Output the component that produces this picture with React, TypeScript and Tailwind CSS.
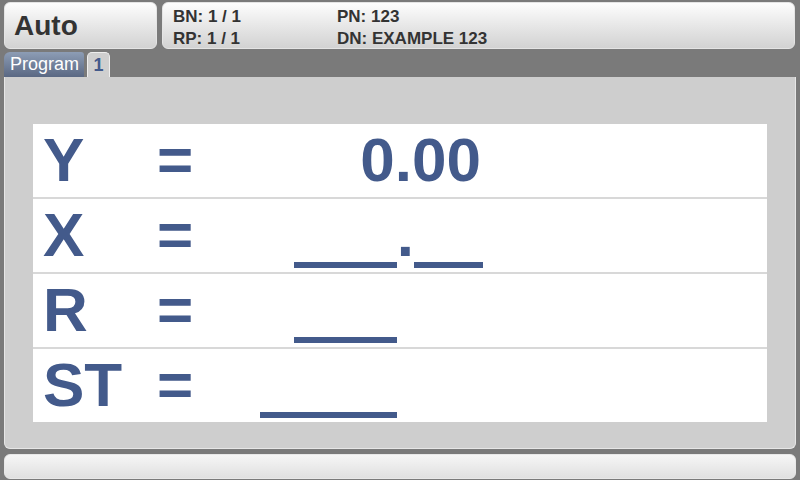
const blue = "text-[#435a8b]";

function Blank({ w }: { w: string }) {
  return <span className={`inline-block h-[6px] align-[-12px] bg-[#435a8b] ${w}`} />;
}

const rows = [
  { label: "Y", value: <>0.00</>, pad: "pr-[2px]" },
  {
    label: "X",
    value: (
      <>
        <Blank w="w-[103px]" />.<Blank w="w-[69px]" />
      </>
    ),
    pad: "",
  },
  { label: "R", value: <Blank w="w-[103px]" />, pad: "pr-[86px]" },
  { label: "ST", value: <Blank w="w-[137px]" />, pad: "pr-[86px]" },
];

export default function App() {
  return (
    <div className="w-[800px] h-[480px] overflow-hidden bg-[#7a7a7a] pt-[2px] px-[4px] font-['Liberation_Sans',Arial,sans-serif]">
      {/* Header */}
      <div className="flex h-[47px] gap-[5px] pr-[1px]">
        <div className="w-[153px] flex items-center pl-[9px] rounded-[6px] border border-[#e4e4e4] bg-gradient-to-b from-[#fdfdfd] to-[#d2d2d2]">
          <span className="text-[28px] leading-[28px] font-bold text-[#333333]">Auto</span>
        </div>
        <div className="flex-1 flex pl-[10px] pt-[3px] rounded-[6px] border border-[#e4e4e4] bg-gradient-to-b from-[#fdfdfd] to-[#d2d2d2] text-[17px] leading-[22px] font-bold text-[#333333]">
          <div className="w-[164px]">
            <div>BN: 1 / 1</div>
            <div>RP: 1 / 1</div>
          </div>
          <div>
            <div>PN: 123</div>
            <div>DN: EXAMPLE 123</div>
          </div>
        </div>
      </div>

      {/* Tabs */}
      <div className="flex gap-[3px] mt-[3px] h-[25px]">
        <div className="w-[80px] pl-[6px] rounded-tl-[6px] rounded-tr-[3px] bg-gradient-to-b from-[#8d9db5] to-[#5a6883] text-white text-[18px] leading-[25px]">
          Program
        </div>
        <div className={`w-[23px] rounded-t-[5px] border border-b-0 border-[#eeeeee] bg-[#cfcfcf] text-center text-[18px] leading-[24px] font-bold ${blue}`}>
          1
        </div>
      </div>

      {/* Main panel */}
      <div className="h-[372px] pl-[28px] pt-[47px] rounded-b-[6px] border border-t-0 border-[#e6e6e6] bg-[#cecece]">
        <div className="w-[734px] flex flex-col gap-[2px] bg-[#d8d8d8]">
          {rows.map((r) => (
            <div key={r.label} className={`h-[73px] bg-white flex pl-[10px] pt-[4px] text-[62px] leading-[64px] font-bold ${blue}`}>
              <div className="w-[114px]">{r.label}</div>
              <div className="w-[37px]">=</div>
              <div className={`w-[289px] text-right whitespace-pre ${r.pad}`}>{r.value}</div>
            </div>
          ))}
        </div>
      </div>

      {/* Footer bar */}
      <div className="h-[25px] mt-[5px] rounded-[6px] border border-[#e8e8e8] bg-gradient-to-b from-[#f6f6f6] to-[#e0e0e0]" />
    </div>
  );
}
